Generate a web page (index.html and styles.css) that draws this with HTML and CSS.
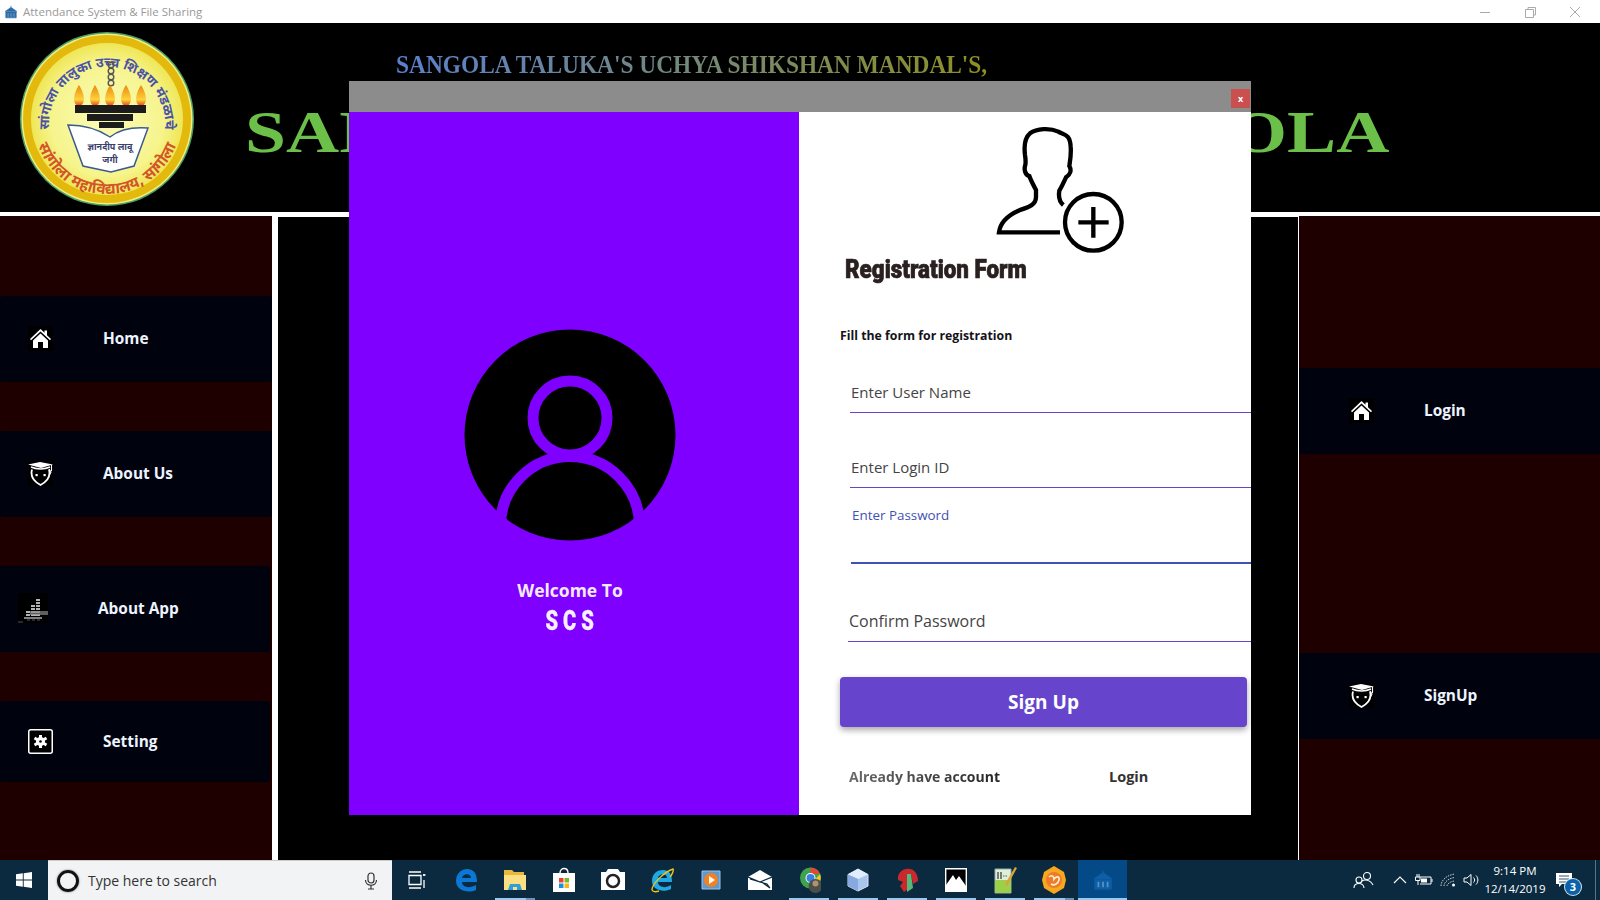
FILE: index.html
```html
<!DOCTYPE html>
<html lang="en">
<head>
<meta charset="utf-8">
<title>Attendance System &amp; File Sharing</title>
<link rel="stylesheet" href="styles.css">
</head>
<body>
<svg class="defs" width="0" height="0" aria-hidden="true">
  <symbol id="i-home" viewBox="0 0 25 25"><rect width="25" height="25" fill="#000"/><path d="M2 13 12.5 3 16.500 6.800V4.500H19V9.200L23 13 22 14.200 12.500 5.500 3 14.200Z" fill="#fff"/><path d="M5 14.500 12.500 7.500 20 14.500V22H15V16H10V22H5Z" fill="#fff"/></symbol>
  <symbol id="i-grad" viewBox="0 0 25 25"><rect width="25" height="25" fill="#000"/><path d="M0 3.500 12 1 25 3.500 13 7 Z" fill="#fff"/><path d="M3 6C8 8.500 17 8.500 22 6" fill="none" stroke="#fff" stroke-width="1.500"/><path d="M4 8.500C2.500 14 5 20 12.500 24 20 20 22.500 14 21 8.500" fill="none" stroke="#fff" stroke-width="1.800"/><path d="M21 8 23 11 21.500 14M23.500 4V10" fill="none" stroke="#fff" stroke-width="1.100"/><rect x="7.500" y="13" width="2.200" height="2.200" fill="#fff"/><rect x="15.500" y="13" width="2.200" height="2.200" fill="#fff"/></symbol>
  <symbol id="i-win" viewBox="0 0 16 16"><path d="M0 2.300 6.800 1.300V7.500H0ZM7.700 1.200 16 0V7.500H7.700ZM0 8.400H6.800V14.700L0 13.700ZM7.700 8.400H16V16L7.700 14.800Z" fill="#fff"/></symbol>
  <symbol id="i-hall" viewBox="0 0 24 24"><path d="M12 1V4M12 4 22 11H2ZM3 12H21V22H3Z" fill="currentColor" stroke="currentColor"/><path d="M7 14V20M12 14V20M17 14V20" stroke="#fff" stroke-opacity=".3" stroke-width="2"/></symbol>
</svg>
<div class="app">
  <div class="titlebar">
    <svg class="app-icon" width="14" height="14"><use href="#i-hall"/></svg>
    <span class="app-title">Attendance System &amp; File Sharing</span>
    <span class="spacer"></span>
    <svg class="winctl" width="46" height="20" viewBox="0 0 46 20"><path d="M18 10.500H28" stroke="#aaa"/></svg>
    <svg class="winctl" width="46" height="20" viewBox="0 0 46 20"><path d="M18.500 7.500H26.500V15.500H18.500ZM21 7V5.500H28.500V13H27" fill="none" stroke="#aaa"/></svg>
    <svg class="winctl" width="46" height="20" viewBox="0 0 46 20"><path d="M18 5 28 15M28 5 18 15" stroke="#aaa"/></svg>
  </div>
  <header class="banner">
    <svg class="logo" width="174" height="176" viewBox="0 0 174 176">
      <defs>
        <radialGradient id="lg"><stop offset="0" stop-color="#fbfbb8"/><stop offset=".75" stop-color="#f6f48c"/><stop offset="1" stop-color="#efe656"/></radialGradient>
        <linearGradient id="fl" x1="0" y1="0" x2="0" y2="1"><stop offset="0" stop-color="#e8880c"/><stop offset=".7" stop-color="#ffd23c"/><stop offset="1" stop-color="#e04010"/></linearGradient>
        <path id="arc-top" d="M29 94A58 58 0 0 1 145 94"/>
        <path id="arc-bot" d="M15 102A73 73 0 0 0 159 102"/>
      </defs>
      <circle cx="87" cy="88" r="87" fill="#4e9e68"/>
      <circle cx="87" cy="88" r="85.500" fill="#f0f080"/>
      <circle cx="87" cy="88" r="84" fill="#e4b90e"/>
      <circle cx="87" cy="88" r="76" fill="url(#lg)"/>
      <text class="logo-top"><textPath href="#arc-top" startOffset="50%" text-anchor="middle">सांगोला तालुका उच्च शिक्षण मंडळाचे</textPath></text>
      <text class="logo-bot"><textPath href="#arc-bot" startOffset="50%" text-anchor="middle">सांगोला महाविद्यालय, सांगोला</textPath></text>
      <g fill="none" stroke="#555" stroke-width="1.400"><circle cx="91" cy="34" r="2.800"/><circle cx="91" cy="40" r="2.800"/><circle cx="91" cy="46" r="2.800"/><circle cx="91" cy="52" r="2.800"/></g>
      <g fill="url(#fl)">
        <path d="M59 54C53 63 52 74 59 75 66 74 65 63 59 54Z"/>
        <path d="M75 54C69 63 68 74 75 75 82 74 81 63 75 54Z"/>
        <path d="M90 54C84 63 83 74 90 75 97 74 96 63 90 54Z"/>
        <path d="M106 54C100 63 99 74 106 75 113 74 112 63 106 54Z"/>
        <path d="M121 54C115 63 114 74 121 75 128 74 127 63 121 54Z"/>
      </g>
      <path d="M55 74H126V82H55ZM67 83H113V90H67ZM79 91H104V97H79Z" fill="#1c1c1c"/>
      <path d="M48 94C62 94 78 98 90 106 100 98 115 96 128 97L114 135 91 141 63 135Z" fill="#fff" stroke="#3c5a8c" stroke-width="1.500"/>
      <text class="logo-book" x="90" y="119" text-anchor="middle">ज्ञानदीप लावू</text>
      <text class="logo-book" x="90" y="132" text-anchor="middle">जगी</text>
    </svg>
    <div class="banner-text">
      <p class="subtitle">SANGOLA TALUKA'S UCHYA SHIKSHAN MANDAL'S,</p>
      <h1 class="college">SANGOLA COLLEGE, SANGOLA</h1>
    </div>
  </header>
  <main class="workspace">
    <nav class="side side-left">
      <a class="nav-item"><svg class="nav-icon" width="25" height="25"><use href="#i-home"/></svg><span>Home</span></a>
      <a class="nav-item"><svg class="nav-icon" width="25" height="25"><use href="#i-grad"/></svg><span>About Us</span></a>
      <a class="nav-item nav-app">
        <svg class="nav-icon" width="30" height="30" viewBox="0 0 30 30"><rect width="30" height="30" fill="#000"/><path d="M18 7H22M18 10H22M18 13H22M13 13H17M18 16H22M13 16H17M8 19H12M13 19H22M8 22H12M13 22H22" stroke="#f0f0f0" stroke-width="1.600"/><rect x="12" y="18" width="18" height="4" fill="#888" opacity=".7"/><path d="M6 25H24" stroke="#fff"/><path d="M0 29H5M9 27H12M14 27H17M19 27H22" stroke="#555"/></svg>
        <span>About App</span>
      </a>
      <a class="nav-item nav-set">
        <svg class="nav-icon" width="25" height="25" viewBox="0 0 25 25"><rect x=".75" y=".75" width="23.500" height="23.500" rx="2" fill="#000" stroke="#fff" stroke-width="1.500"/><path d="M12.500 6V19M6.500 9 18.500 16M6.500 16 18.500 9" stroke="#fff" stroke-width="3"/><circle cx="12.500" cy="12.500" r="4.500" fill="#fff"/><circle cx="12.500" cy="12.500" r="1.300" fill="#000"/></svg>
        <span>Setting</span>
      </a>
    </nav>
    <section class="stage"></section>
    <nav class="side side-right">
      <a class="nav-item"><svg class="nav-icon" width="25" height="25"><use href="#i-home"/></svg><span>Login</span></a>
      <a class="nav-item"><svg class="nav-icon" width="25" height="25"><use href="#i-grad"/></svg><span>SignUp</span></a>
    </nav>
  </main>
  <footer class="taskbar">
    <div class="start"><svg width="16" height="16"><use href="#i-win"/></svg></div>
    <div class="search">
      <span class="cortana"></span>
      <span class="search-text">Type here to search</span>
      <svg class="mic" width="14" height="18" viewBox="0 0 14 18"><rect x="4" y="1" width="6" height="10" rx="3" fill="none" stroke="#333" stroke-width="1.200"/><path d="M1.500 8C1.500 15 12.500 15 12.500 8M7 13V17M4 17H10" fill="none" stroke="#333" stroke-width="1.200"/></svg>
    </div>
    <div class="tile"><svg width="18" height="18" viewBox="0 0 18 18"><path d="M1 1H13M1 4.500H13V13.500H1ZM1 17H13" fill="none" stroke="#fff" stroke-width="1.300"/><path d="M16 3V5M15 4H17.500M16 9V17" stroke="#fff" stroke-width="1.300"/></svg></div>
    <div class="tile"><svg width="24" height="24" viewBox="0 0 24 24"><path d="M2 13C2 5 8 1 13 1 20 1 23 6 23 14H8C8 19 15 21 22 17V22C13 26 2 22 2 13ZM8 10H17C17 5 9 5 8 10Z" fill="#0a78d4"/></svg></div>
    <div class="tile run-split"><svg width="24" height="24" viewBox="0 0 24 24"><path d="M1 2H9L11 4H21V8H1Z" fill="#e8b83e"/><path d="M1 7H23V22H1Z" fill="#fcdf83"/><path d="M7 16H17L19 22H5Z" fill="#2f9fdc"/><path d="M10 19H14V22H10Z" fill="#fcdf83"/></svg></div>
    <div class="tile"><svg width="24" height="26" viewBox="0 0 24 26"><path d="M8 6C8 0 16 0 16 6" fill="none" stroke="#fff" stroke-width="1.400"/><path d="M1 6H23V25H1Z" fill="#fff"/><path d="M7 11H11.500V15.500H7Z" fill="#e8452c"/><path d="M12.500 11H17V15.500H12.500Z" fill="#7cb82f"/><path d="M7 16.500H11.500V21H7Z" fill="#1c8fe0"/><path d="M12.500 16.500H17V21H12.500Z" fill="#f5b915"/></svg></div>
    <div class="tile"><svg width="24" height="22" viewBox="0 0 24 22"><path d="M0 3H5L7 0H17L19 3H24V21H0Z" fill="#fff"/><circle cx="12" cy="12" r="6" fill="none" stroke="#222" stroke-width="2.500"/></svg></div>
    <div class="tile"><svg width="24" height="26" viewBox="0 0 24 26"><path d="M2 14C2 6 8 3 13 3 20 3 22 8 22 15H8C8 20 15 22 21 18V22C13 26 2 23 2 14ZM8 11H17C17 6 9 6 8 11Z" fill="#1fa8e4"/><path d="M2 23C2 17 14 5 23 2 24 3 22 8 20 10M2 23C3 25 6 25 9 24" fill="none" stroke="#f0c419" stroke-width="1.400"/></svg></div>
    <div class="tile"><svg width="20" height="22" viewBox="0 0 20 22"><path d="M1 2H19V20H1Z" fill="#5d9ad0" stroke="#9bc2e6"/><circle cx="10" cy="11" r="7" fill="#f58020"/><path d="M8 7 14 11 8 15Z" fill="#fff"/></svg></div>
    <div class="tile"><svg width="24" height="20" viewBox="0 0 24 20"><path d="M0 7 12 0 24 7V20H0Z" fill="#fff"/><path d="M0 7 12 12 24 7M2 9 19 14 22 18 15 13" fill="none" stroke="#0b2a40" stroke-width="1.200"/></svg></div>
    <div class="tile run"><svg width="24" height="30" viewBox="-2.500 -2 24 30"><circle cx="11" cy="11" r="10.500" fill="#3fa24c"/><path d="M11 .5A10.500 10.500 0 0 1 20.500 7H11Z" fill="#e5463a"/><path d="M20.500 7A10.500 10.500 0 0 1 13 21L16 12Z" fill="#f6c62c"/><circle cx="11" cy="11" r="5" fill="#fff"/><circle cx="11" cy="11" r="4" fill="#3a7fe4"/><circle cx="16" cy="19" r="7" fill="#4a5048"/><circle cx="16" cy="16.500" r="3" fill="#b09078"/></svg></div>
    <div class="tile run"><svg width="22" height="24" viewBox="0 0 22 24"><path d="M11 1 21 6.500V18L11 23 1 18V6.500Z" fill="#a8c6ec" stroke="#e4e0f8"/><path d="M11 1 21 6.500 11 11 1 6.500Z" fill="#e0eefc"/><path d="M11 11V23L1 18V6.500Z" fill="#88a8e0"/></svg></div>
    <div class="tile run"><svg width="24" height="26" viewBox="0 0 24 26"><path d="M3 13C2 6 8 1 15 2 21 3 23 9 23 14L18 17 16 7H12L13 22 9 25 5 19 8 15Z" fill="#c9282c"/><path d="M12 7H16L18 21 12 25Z" fill="#57b878"/></svg></div>
    <div class="tile run"><svg width="22" height="24" viewBox="0 0 22 24"><path d="M.7.700H21.300V23.300H.7Z" fill="#000" stroke="#fff" stroke-width="1.400"/><path d="M1 21V17L8 7 11 12 14 8 21 18V23H1Z" fill="#fff"/></svg></div>
    <div class="tile run"><svg width="24" height="28" viewBox="0 0 24 28"><path d="M2 3H18V27H2Z" fill="#dff0d8" stroke="#9aa"/><path d="M2 14H18V27H2Z" fill="#9ccf4a"/><path d="M5 6V13M8 6V13" stroke="#333" stroke-width="1.200"/><path d="M10 10H14" stroke="#555" stroke-dasharray="1.500 1"/><path d="M12 18 22 1 24 2 14 20Z" fill="#d9a53a"/></svg></div>
    <div class="tile run-split"><svg width="24" height="28" viewBox="0 0 24 28"><path d="M12 0 22 6 24 14 22 22 12 28 2 22 0 14 2 6Z" fill="#f7a81c"/><circle cx="12" cy="14" r="8" fill="#ee7a2c"/><path d="M7 11C10 8 12 11 12 13 14 10 18 10 17 14 16 18 12 20 9 18" fill="none" stroke="#fff2d0" stroke-width="1.600"/></svg></div>
    <div class="tile tile-active"><svg class="hall-dim" width="22" height="22"><use href="#i-hall"/></svg></div>
    <span class="spacer"></span>
    <div class="tray">
      <svg class="t-people" width="22" height="18" viewBox="0 0 22 18"><circle cx="14" cy="5" r="3.500" fill="none" stroke="#fff" stroke-width="1.100"/><circle cx="6" cy="9" r="3" fill="none" stroke="#fff" stroke-width="1.100"/><path d="M1 17C1 13 3.500 12.500 6 12.500S11 14 11 17M9 10C11 8.500 17 8 20 14" fill="none" stroke="#fff" stroke-width="1.100"/></svg>
      <svg class="t-chev" width="14" height="8" viewBox="0 0 14 8"><path d="M1 7 7 1 13 7" fill="none" stroke="#fff" stroke-width="1.100"/></svg>
      <svg class="t-bat" width="18" height="12" viewBox="0 0 18 12"><path d="M5 3H16V10H5" fill="none" stroke="#fff"/><path d="M6 4.500H12V8.500H6Z" fill="#fff"/><path d="M17 5V8" stroke="#fff"/><path d="M.5 3H5V6.500H.5ZM2 0V3M4 0V3M3 6V11" stroke="#fff" fill="none"/></svg>
      <svg class="t-wifi" width="16" height="14" viewBox="0 0 16 14"><path d="M1 13C1 7 7 2 15 1M4 13C4 9 9 5 15 4.500M7 13C7 11 11 8 15 8" fill="none" stroke="#ccc" stroke-dasharray="1.500 1"/><circle cx="13.500" cy="12" r="1.500" fill="#fff"/></svg>
      <svg class="t-vol" width="17" height="14" viewBox="0 0 17 14"><path d="M1 5H4L8 1.500V12.500L4 9H1Z" fill="none" stroke="#fff"/><path d="M10.500 4.500C12 6 12 8 10.500 9.500M13 2.500C15.500 5 15.500 9 13 11.500" fill="none" stroke="#fff"/></svg>
      <div class="clock"><span>9:14 PM</span><span>12/14/2019</span></div>
      <div class="notif">
        <svg width="16" height="15" viewBox="0 0 16 15"><path d="M0 0H16V11H6L3 14V11H0Z" fill="#fff"/><path d="M3 3H13M3 6H13M3 9H10" stroke="#0b2a40" stroke-width=".8"/></svg>
        <span class="badge">3</span>
      </div>
      <span class="show-desktop"></span>
    </div>
  </footer>
</div>
<div class="modal">
  <div class="modal-bar"><button class="close">x</button></div>
  <div class="modal-body">
    <div class="welcome">
      <svg class="avatar" width="212" height="212" viewBox="0 0 212 212"><circle cx="106" cy="106" r="105.500" fill="#000"/><circle cx="106" cy="89" r="37" fill="none" stroke="#7f00ff" stroke-width="11"/><circle cx="106" cy="197" r="69.500" fill="none" stroke="#7f00ff" stroke-width="11"/></svg>
      <p class="welcome-to">Welcome To</p>
      <p class="welcome-scs">SCS</p>
    </div>
    <form class="form">
      <svg class="form-icon" width="132" height="130" viewBox="525 135 396 390"><path d="M720 457H537C541 425 565 405 600 390 625 382 648 375 648 350V330C640 315 632 300 628 288 616 285 612 270 615 258 618 250 618 245 615 225 612 200 612 175 630 160 650 145 690 143 715 155 730 165 750 160 752 200 754 225 750 245 748 258 755 270 752 283 738 292 732 305 725 320 718 332 715 350 718 365 730 375" fill="none" stroke="#000" stroke-width="13"/><circle cx="820" cy="427" r="85" fill="none" stroke="#000" stroke-width="13"/><path d="M775 427H866M820 381V473" stroke="#000" stroke-width="13"/></svg>
      <h2 class="form-title">Registration Form</h2>
      <p class="form-hint">Fill the form for registration</p>
      <div class="field f-user">Enter User Name</div>
      <div class="field f-id">Enter Login ID</div>
      <div class="field f-pass">Enter Password</div>
      <div class="field f-conf">Confirm Password</div>
      <button class="signup" type="button">Sign Up</button>
      <div class="have"><span class="have-text">Already have account</span><span class="have-login">Login</span></div>
    </form>
  </div>
</div>
</body>
</html>
```
FILE: styles.css
```css
* { box-sizing: border-box; }
html, body { margin: 0; padding: 0; width: 1600px; height: 900px; overflow: hidden; }
body { font-family: "Open Sans", "Noto Sans", sans-serif; background: #000; position: relative; }
p, h1, h2 { margin: 0; }
.defs { position: absolute; }
.spacer { flex: 1; }
.app { width: 1600px; height: 900px; display: flex; flex-direction: column; }

.titlebar { height: 23px; background: #fff; display: flex; align-items: center; flex: none; padding-right: 2px; }
.app-icon { margin-left: 4px; color: #2d6ca8; }
.app-title { margin-left: 5px; font-size: 11.500px; color: #999; white-space: nowrap; }
.winctl { display: block; margin-left: -1px; }

.banner { height: 193px; flex: none; background: #000; border-bottom: 4px solid #fff; display: flex; overflow: hidden; }
.logo { margin: 8px 0 0 20px; flex: none; }
.logo-top { font: bold 13.500px "Noto Sans Devanagari", "Noto Sans", sans-serif; fill: #4a52a8; }
.logo-bot { font: bold 15.500px "Noto Sans Devanagari", "Noto Sans", sans-serif; fill: #d2552a; }
.logo-book { font: bold 9px "Noto Sans Devanagari", "Noto Sans", sans-serif; fill: #39406e; }
.banner-text { flex: none; margin-left: 51px; }
.subtitle {
  margin: 28px 0 0 151px; font: bold 25px/28px "Liberation Serif", serif; white-space: nowrap; width: 640px;
  background: linear-gradient(90deg, #5a80d0, #8f9020); -webkit-background-clip: text; background-clip: text; color: transparent;
  transform: scaleX(.935); transform-origin: left center;
}
.college { margin-top: 18px; font: bold 60px/70px "Liberation Serif", serif; color: #6cc04a; white-space: nowrap; transform: scaleX(1.228); transform-origin: left center; width: 1000px; }

.workspace { flex: 1; display: flex; min-height: 0; background: #fff; }
.side { background: #1e0000; display: flex; flex-direction: column; }
.side-left { width: 272px; padding-top: 80px; gap: 49px; }
.stage { flex: 1; background: #000; margin: 1px 1px 0 6px; }
.side-right { width: 301px; padding-top: 152px; gap: 199px; }
.nav-item { height: 86px; background: #00030e; border-radius: 3px; display: flex; align-items: center; padding-left: 28px; padding-bottom: 2px; gap: 50px; color: #eef4ff; font-weight: 700; font-size: 15.400px; }
.nav-icon { flex: none; display: block; }
.nav-app { width: 270px; padding-left: 18px; }
.nav-set { height: 81px; width: 270px; padding-bottom: 0; }
.side-right .nav-item { padding-left: 50px; border-radius: 0; }

.taskbar { height: 40px; flex: none; background: #0b2a40; display: flex; align-items: center; }
.start { width: 48px; height: 40px; display: flex; align-items: center; justify-content: center; }
.search { width: 344px; height: 40px; background: #f2f3f5; border-top: 1px solid #ccc; display: flex; align-items: center; padding-left: 9px; }
.cortana { width: 22px; height: 22px; border: 3px solid #111; border-radius: 50%; box-shadow: 0 0 2px #666; flex: none; }
.search-text { margin-left: 9px; font-size: 14px; color: #333; }
.mic { margin-left: auto; margin-right: 14px; }
.tile { width: 49px; height: 40px; flex: none; display: flex; align-items: center; justify-content: center; position: relative; }
.tile.run::after, .tile.run-split::after, .tile-active::after { content: ""; position: absolute; left: 5px; right: 4px; bottom: 0; height: 2px; background: #99c9ee; }
.tile.run-split::after { background: linear-gradient(90deg, #99c9ee 77%, #6d94b4 77%); }
.tile-active { background: #034a86; }
.tile-active::after { left: 0; right: 0; }
.hall-dim { color: #0e5fa6; }
.tray { display: flex; align-items: center; height: 40px; position: relative; width: 260px; }
.t-people { margin-left: 13px; }
.t-chev { margin-left: 18px; }
.t-bat { margin-left: 8px; }
.t-wifi { margin-left: 7px; }
.t-vol { margin-left: 7px; }
.clock { width: 68px; margin-left: 1px; display: flex; flex-direction: column; align-items: center; color: #fff; font-size: 11.500px; line-height: 18px; }
.notif { width: 28px; margin-left: 7px; height: 40px; position: relative; display: flex; align-items: center; }
.badge { position: absolute; left: 9px; top: 19px; width: 16px; height: 16px; border-radius: 50%; background: #0a62a8; color: #fff; font-size: 11px; font-weight: 700; line-height: 16px; text-align: center; box-shadow: 0 0 0 1px #d0e4f4; }
.show-desktop { width: 1px; height: 40px; background: #5b7385; margin-left: auto; margin-right: 4px; }

.modal { position: absolute; left: 349px; top: 81px; width: 902px; height: 734px; display: flex; flex-direction: column; }
.modal-bar { height: 31px; background: #8c8c8c; display: flex; justify-content: flex-end; align-items: flex-start; padding: 8px 1px 0 0; flex: none; }
.close { width: 19px; height: 19px; border: 0; padding: 0; background: #c9504f; color: #fff; font: bold 9px/17px "Open Sans", sans-serif; }
.modal-body { flex: 1; display: flex; min-height: 0; }
.welcome { width: 450px; background: #7f00ff; flex: none; display: flex; flex-direction: column; align-items: center; padding-top: 217px; padding-right: 8px; }
.avatar { display: block; margin-bottom: 36px; }
.welcome-to { color: #f4eaff; font-size: 17.500px; font-weight: 700; line-height: 26px; }
.welcome-scs { color: #f6efff; font: 900 28px/32px Roboto, sans-serif; letter-spacing: 7px; margin: 2px 0 0 5px; -webkit-text-stroke: .3px #f6efff; transform: scaleX(.72); }

.form { flex: 1; background: #fff; display: flex; flex-direction: column; min-width: 0; }
.form-icon { display: block; margin: 13px 0 0 196px; flex: none; }
.form-title { margin: 0 0 0 46px; font: 900 26px/28px Roboto, sans-serif; color: #2a2020; white-space: nowrap; transform: scaleX(.86); transform-origin: left center; height: 28px; -webkit-text-stroke: .7px #2a2020; }
.form-hint { margin: 43px 0 0 41px; font-size: 12.300px; font-weight: 700; line-height: 20px; color: #15121a; }
.field { color: #444; font-size: 15px; line-height: 32px; height: 37px; border-bottom: 1px solid #6645cc; padding-left: 1px; }
.f-user { margin: 30px 0 0 51px; }
.f-id { margin: 38px 0 0 51px; }
.f-pass { margin: 0 0 0 52px; height: 76px; padding-top: 18px; font-size: 13.400px; line-height: 18px; color: #3f51b5; border-bottom: 2px solid #3f51b5; }
.f-conf { margin: 40px 0 0 49px; height: 38px; font-size: 16px; line-height: 34px; padding-left: 1px; }
.signup { margin: 35px 0 0 41px; width: 407px; height: 50px; flex: none; border: 0; border-radius: 4px; background: #6645cc; color: #fff; font: 700 19px/48px "Open Sans", sans-serif; box-shadow: 0 3px 6px rgba(0,0,0,.35); }
.have { margin: 40px 0 0 50px; display: flex; font-size: 14px; font-weight: 700; line-height: 20px; }
.have-text { width: 260px; background: linear-gradient(90deg, #6a6a6a, #222 60%); -webkit-background-clip: text; background-clip: text; color: transparent; }
.have-login { color: #333; font-size: 14.500px; }
```
